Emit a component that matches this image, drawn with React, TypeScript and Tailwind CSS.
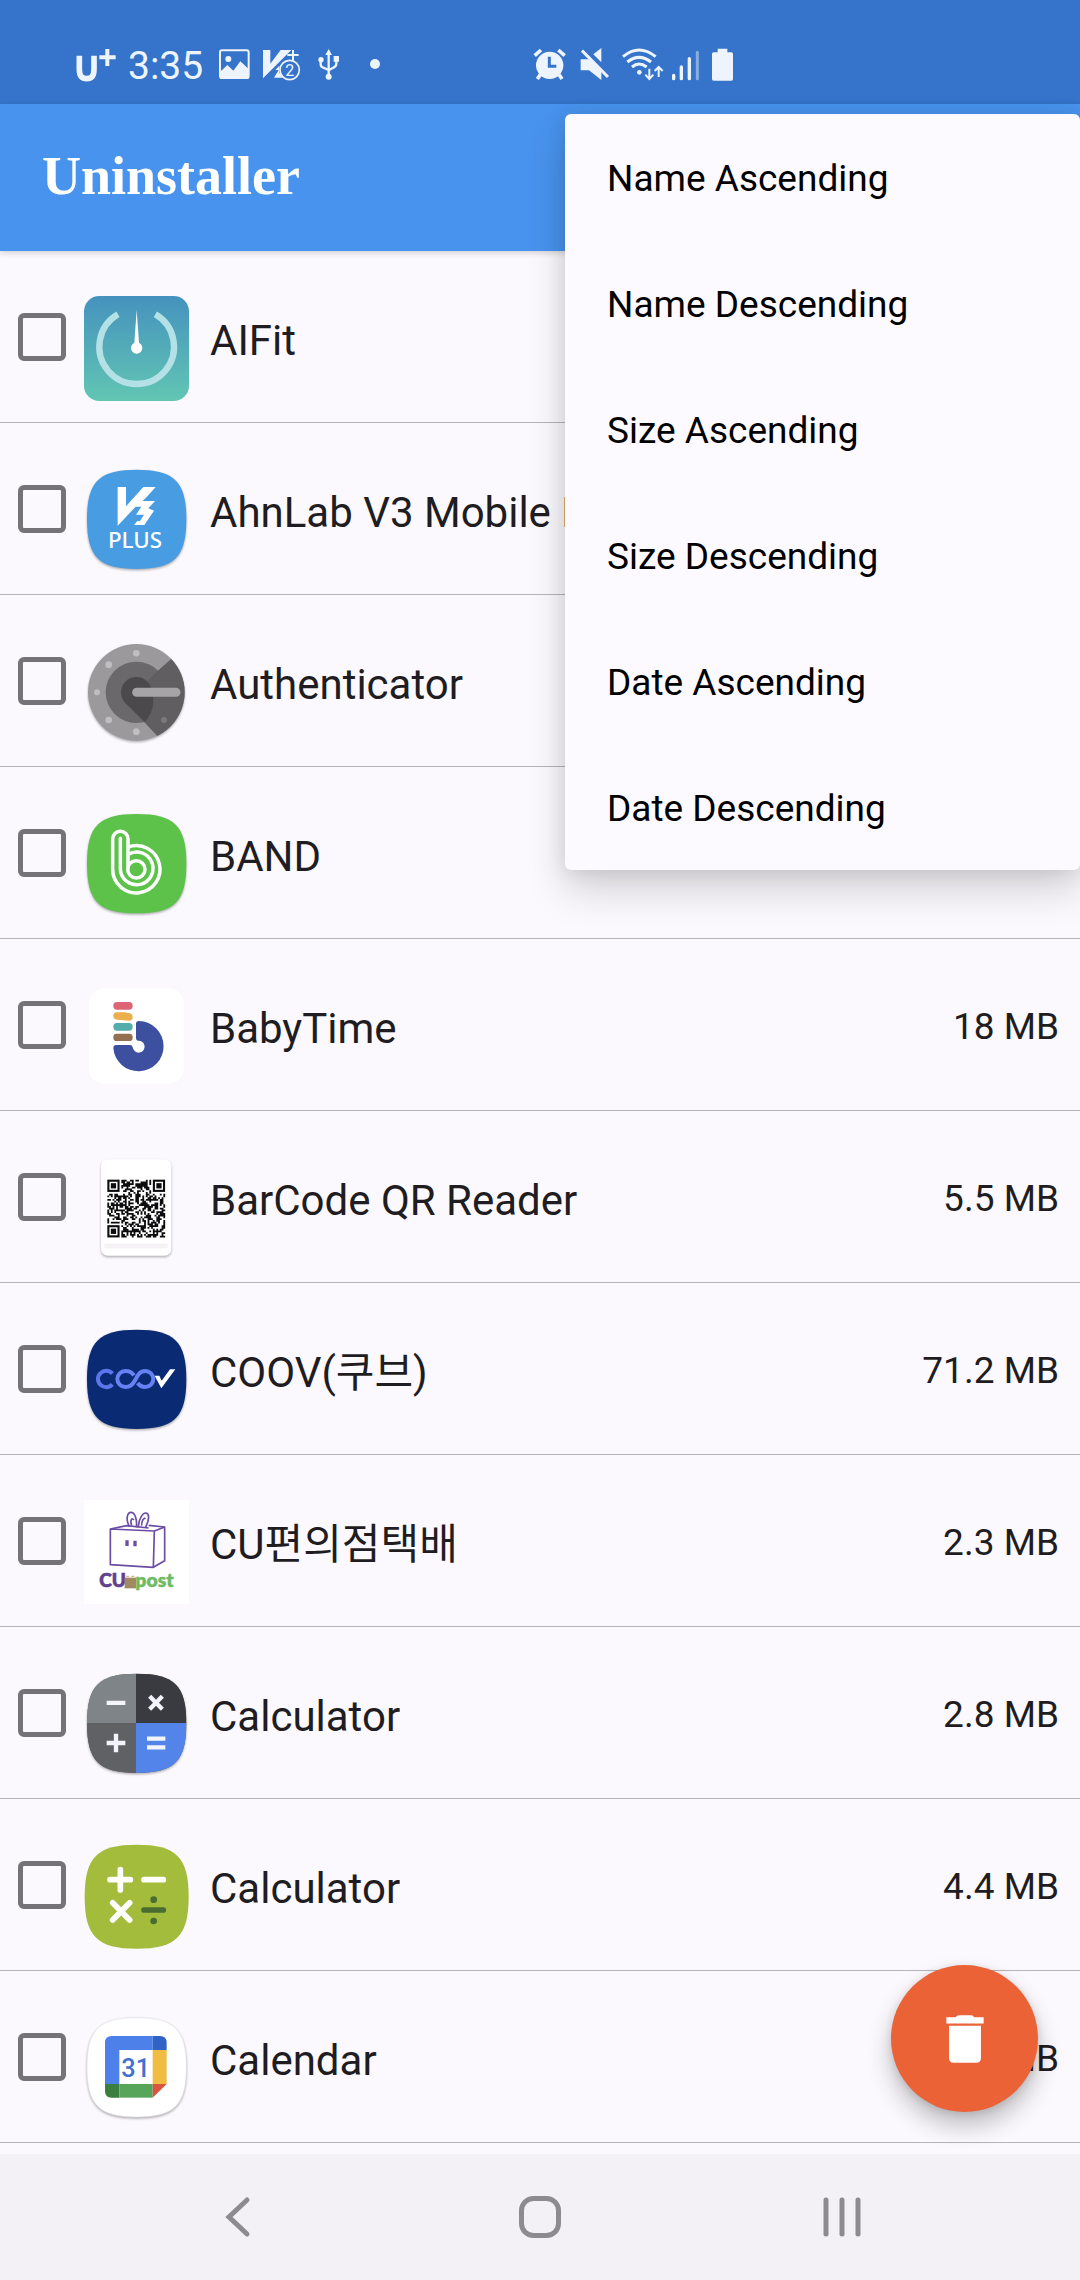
import React, { useState } from "react";

/* ---------- shared drawing helpers ---------- */

function squircle(cx: number, cy: number, r: number) {
  const k = r * 0.76;
  return `M${cx} ${cy - r}C${cx + k} ${cy - r} ${cx + r} ${cy - k} ${cx + r} ${cy}C${cx + r} ${cy + k} ${cx + k} ${cy + r} ${cx} ${cy + r}C${cx - k} ${cy + r} ${cx - r} ${cy + k} ${cx - r} ${cy}C${cx - r} ${cy - k} ${cx - k} ${cy - r} ${cx} ${cy - r}Z`;
}

function IconFrame({ top, children }: { top: number; children: React.ReactNode }) {
  return (
    <svg viewBox={`252 ${top} 315 315`} className="size-full overflow-visible" aria-hidden="true">
      {children}
    </svg>
  );
}

const SOFT = "drop-shadow-[0_4px_3px_rgba(0,0,0,0.32)]";

/* ---------- app icons ---------- */

function AiFitIcon() {
  return (
    <IconFrame top={108}>
      <defs>
        <linearGradient id="aifit" x1="0" y1="0" x2="0" y2="1">
          <stop offset="0" stopColor="#4592be" />
          <stop offset="1" stopColor="#62c6b3" />
        </linearGradient>
      </defs>
      <rect x="252" y="108" width="315" height="315" rx="46" fill="url(#aifit)" />
      <path d="M354 163A112 112 0 1 0 466 163" fill="none" stroke="#b3e1e6" strokeWidth="19" />
      <path d="M410 150L402 262H418Z" fill="#fff" />
      <circle cx="410" cy="264" r="17" fill="#fff" />
    </IconFrame>
  );
}

function V3Icon() {
  return (
    <IconFrame top={624}>
      <path d={squircle(410, 778, 149)} fill="#489ce1" className={SOFT} />
      <path
        d="M353 681H378V739L430 681H467L440 711L428 723H465L445 745L462 752L433 795H402L412 783H420L432 764H408L424 740H407L353 797Z"
        fill="#fff"
      />
      <text x="324" y="863" fontFamily="'Noto Sans', sans-serif" fontSize="67" fontWeight="500" fill="#fff">
        PLUS
      </text>
    </IconFrame>
  );
}

function AuthenticatorIcon() {
  return (
    <IconFrame top={60}>
      <defs>
        <clipPath id="auth-disc">
          <circle cx="409" cy="217" r="145" />
        </clipPath>
      </defs>
      <circle cx="409" cy="217" r="145" fill="#9b999b" className={SOFT} />
      <g clipPath="url(#auth-disc)">
        <circle cx="409" cy="217" r="92" fill="#6a686b" />
        <path d="M472 154L514 116L570 160V300L474 350L378 248L409 217Z" fill="#605e61" />
        <path d="M377 250L440 184A92 92 0 0 1 434 306Z" fill="#4b494c" />
        <circle cx="409" cy="217" r="46" fill="#4b494c" />
      </g>
      <g fill="#c0bec0">
        <circle cx="409" cy="100" r="10" />
        <circle cx="326" cy="134" r="10" />
        <circle cx="291" cy="217" r="9" />
        <circle cx="326" cy="300" r="10" />
        <circle cx="409" cy="335" r="10" />
      </g>
      <circle cx="492" cy="300" r="9" fill="#7b797b" />
      <path d="M410 217H528" stroke="#a6a4a6" strokeWidth="27" strokeLinecap="round" />
    </IconFrame>
  );
}

function BandIcon() {
  return (
    <IconFrame top={576}>
      <path d={squircle(410, 731, 149)} fill="#5cc24a" className={SOFT} />
      <g fill="none" stroke="#fff" strokeWidth="10.5">
        <path d="M385 681A71 71 0 1 1 338 748V657A22.500 22.500 0 0 1 384 657V748" />
        <path d="M385 703A49 49 0 1 1 361 748V655" strokeLinecap="round" />
        <circle cx="409" cy="748" r="26" />
      </g>
    </IconFrame>
  );
}

function BabyTimeIcon() {
  return (
    <IconFrame top={72}>
      <rect x="267" y="85" width="284" height="286" rx="44" fill="#fff" />
      <rect x="340" y="126" width="58" height="23" rx="11" fill="#dc6676" />
      <path d="M351 157H375L388 160Q398 161 398 172Q398 183 386 182L351 179Q340 178 340 168Q340 157 351 157Z" fill="#ebb04c" />
      <rect x="340" y="189" width="58" height="23" rx="11" fill="#53adab" />
      <rect x="340" y="221" width="58" height="22" rx="10" fill="#937052" />
      <path d="M408 191Q408 183 417 183A75.500 75.500 0 1 1 340 264Q340 255 349 255H390Q397 255 398 262A18 18 0 1 0 414 242Q408 242 408 234Z" fill="#3c509f" />
    </IconFrame>
  );
}

function isFinder(r: number, c: number) {
  return (r < 8 && c < 8) || (r < 8 && c > 24) || (r > 24 && c < 8);
}

const QR_MODULES = (() => {
  let seed = 20417;
  let d = "";
  for (let r = 0; r < 33; r++) {
    for (let c = 0; c < 33; c++) {
      seed = (seed * 1103515245 + 12345) % 2147483648;
      if (!isFinder(r, c) && seed / 2147483648 < 0.53) d += `M${c} ${r}h1.05v1.05h-1.05z`;
    }
  }
  return d;
})();

function QrIcon() {
  return (
    <IconFrame top={588}>
      <rect x="303" y="598" width="211" height="289" rx="20" fill="#fff" className={SOFT} />
      <rect x="313" y="851" width="190" height="14" fill="#f5f3f6" />
      <g transform="translate(322 659) scale(5.25)" fill="#0c0c0e">
        <path d={QR_MODULES} />
        {[
          [0, 0],
          [26, 0],
          [0, 26],
        ].map(([x, y]) => (
          <g key={`${x}-${y}`}>
            <rect x={x + 0.6} y={y + 0.6} width="5.800" height="5.800" fill="none" stroke="#0c0c0e" strokeWidth="1.200" />
            <rect x={x + 2} y={y + 2} width="3" height="3" />
          </g>
        ))}
      </g>
    </IconFrame>
  );
}

function CoovIcon() {
  return (
    <IconFrame top={84}>
      <path d={squircle(410, 238, 149)} fill="#0a2a73" className={SOFT} />
      <g fill="none" strokeWidth="12">
        <path d="M337 221A24.500 24.500 0 1 0 337 253" stroke="#5a76ea" />
        <path d="M402 226C396 217 387 213 376 213A24 24 0 0 0 376 261C391 261 397 254 405 241C413 225 420 213 436 213A24 24 0 0 1 436 261C425 261 418 256 413 249" stroke="#6681f4" />
      </g>
      <path d="M464 227H478L485 242L510 208H526L484 265Z" fill="#fff" />
    </IconFrame>
  );
}

function CuPostIcon() {
  return (
    <IconFrame top={600}>
      <rect x="252" y="600" width="315" height="312" fill="#fff" />
      <g fill="none" stroke="#6b4da3" strokeWidth="5" strokeLinejoin="round">
        <path d="M331 687L463 693L460 802L331 794Z" />
        <path d="M463 693L494 681V782L460 802" />
        <path d="M331 687L380 677M446 676L494 681M380 677L446 684" />
        <path d="M388 680C376 658 382 637 393 637C405 637 412 660 409 682M415 682C416 656 428 638 438 639C450 641 447 664 436 682" />
        <path d="M395 676C389 660 396 652 402 660M425 677C424 664 432 650 436 657" />
      </g>
      <path d="M381 721V738M405 722V739" stroke="#6b4da3" strokeWidth="10" />
      <text x="298" y="861" fontFamily="Lato, sans-serif" fontWeight="900" fontSize="57" fill="#60408f" stroke="#60408f" strokeWidth="2">
        CU
      </text>
      <path d="M374 833H408V865H374Z" fill="#a08a62" />
      <path d="M379 829H387M394 829H403" stroke="#d8b27d" strokeWidth="4" />
      <text x="406" y="861" fontFamily="Lato, sans-serif" fontWeight="800" fontSize="58" fill="#6fba62" stroke="#6fba62" strokeWidth="1">
        post
      </text>
    </IconFrame>
  );
}

function GoogleCalcIcon() {
  return (
    <IconFrame top={96}>
      <defs>
        <clipPath id="gcalc">
          <path d={squircle(410, 250, 149)} />
        </clipPath>
      </defs>
      <path d={squircle(410, 250, 149)} fill="#606164" className={SOFT} />
      <g clipPath="url(#gcalc)">
        <rect x="258" y="98" width="150" height="151" fill="#7f8488" />
        <rect x="408" y="98" width="155" height="151" fill="#3a3b40" />
        <rect x="258" y="249" width="150" height="155" fill="#606164" />
        <rect x="408" y="249" width="155" height="155" fill="#5284ea" />
      </g>
      <g stroke="#f1f4fa" strokeWidth="13">
        <path d="M320 188.500H376M320 309H376M348 281V337" />
        <path d="M449 169L487 208M487 169L449 208" />
        <path d="M441 296H496M441 322H496" />
      </g>
    </IconFrame>
  );
}

function GreenCalcIcon() {
  return (
    <IconFrame top={612}>
      <path d={squircle(410, 770, 156)} fill="#a3bc3c" />
      <g stroke="#fff" strokeWidth="17" strokeLinecap="round">
        <path d="M330 719H391M361 689V750M432 719H490" />
        <path d="M338 788L389 840M389 788L338 840" />
      </g>
      <path d="M432 810H490" stroke="#496c31" strokeWidth="17" strokeLinecap="round" />
      <circle cx="461" cy="779" r="10" fill="#496c31" />
      <circle cx="461" cy="843" r="10" fill="#496c31" />
    </IconFrame>
  );
}

function CalendarIcon() {
  return (
    <IconFrame top={108}>
      <path d={squircle(410, 262, 149)} fill="#fff" stroke="#e4e2e5" strokeWidth="2" className={SOFT} />
      <path d="M335 168H458V210H358V312H315V188Q315 168 335 168Z" fill="#4e80ea" />
      <path d="M458 168H480Q500 168 500 188V210H458Z" fill="#3163c6" />
      <rect x="458" y="210" width="42" height="102" fill="#f0bd42" />
      <path d="M315 312H358V353H335Q315 353 315 333Z" fill="#3a7e40" />
      <rect x="358" y="312" width="100" height="41" fill="#57a45b" />
      <path d="M458 312H500L458 353Z" fill="#d9553f" />
      <text x="407" y="291" textAnchor="middle" fontFamily="Roboto, sans-serif" fontWeight="500" fontSize="76" fill="#3f72d2">
        31
      </text>
    </IconFrame>
  );
}

/* ---------- status bar ---------- */

function StatusBar() {
  return (
    <div className="flex h-[104px] items-start bg-[#3574ca] pt-12 text-[#eef4fd]">
      <div className="flex w-[533px] shrink-0 items-start pl-[75px]">
        <svg viewBox="225 144 126 102" className="h-[34px] w-[42px]" role="img" aria-label="U+">
          <path d="M238 167V208C238 230 247 236 260 236C273 236 282 230 282 208V167" fill="none" stroke="currentColor" strokeWidth="17" />
          <path d="M298 172H347M322 147V198" stroke="currentColor" strokeWidth="12" />
        </svg>
        <span className="ml-[11px] w-[79px] text-[39px] leading-9">3:35</span>
        <svg viewBox="654 144 99 102" className="ml-[11px] h-[34px] w-[33px]" aria-hidden="true">
          <rect x="660" y="151" width="86" height="83" rx="6" fill="none" stroke="currentColor" strokeWidth="6" />
          <circle cx="685" cy="177" r="9" fill="currentColor" />
          <path d="M660 216L682 195L700 212L721 184L746 207V236H660Z" fill="currentColor" />
        </svg>
        <svg viewBox="786 144 117 102" className="ml-[11px] h-[34px] w-[39px]" aria-hidden="true">
          <path d="M789 150H811V191L842 150H874L789 235Z" fill="currentColor" />
          <path d="M862 165H896M879 150V182" stroke="currentColor" strokeWidth="6" />
          <path d="M838 197L826 210H836L822 233H848L838 218Z" fill="currentColor" />
          <circle cx="869" cy="210" r="29" fill="#3574ca" stroke="currentColor" strokeWidth="5" />
          <text x="869" y="227" textAnchor="middle" fontFamily="Roboto, sans-serif" fontSize="48" fill="currentColor">
            2
          </text>
        </svg>
        <svg viewBox="951 144 72 102" className="ml-4 h-[34px] w-6" aria-hidden="true">
          <path d="M986 160V230M962 175V193Q962 201 970 203L986 210M1009 177V190Q1009 199 1002 202L986 211" fill="none" stroke="currentColor" strokeWidth="7" />
          <path d="M986 147L996 165H976ZM1001 168H1017V185H1001Z" fill="currentColor" />
          <circle cx="963" cy="179" r="8" fill="currentColor" />
          <circle cx="986" cy="230" r="9" fill="currentColor" />
        </svg>
        <span className="mt-[11px] ml-[29px] size-2.5 rounded-full bg-[#eef4fd]" />
      </div>
      <div className="flex items-start gap-3.5">
        <svg viewBox="97 84 99 102" className="h-[34px] w-[33px]" aria-hidden="true">
          <circle cx="147" cy="136" r="41" fill="currentColor" />
          <path d="M102 107L121 90M192 107L173 90" stroke="currentColor" strokeWidth="11" />
          <path d="M119 164L110 177M175 164L184 177" stroke="currentColor" strokeWidth="11" />
          <path d="M146 110V139H167" fill="none" stroke="#3574ca" strokeWidth="9" />
        </svg>
        <svg viewBox="241 84 90 102" className="h-[34px] w-[30px]" aria-hidden="true">
          <path d="M243 118H268L305 155V180L268 151H243Z" fill="currentColor" />
          <path d="M281 103L305 84V127Z" fill="currentColor" />
          <path d="M252 86L330 166" stroke="#3574ca" strokeWidth="7" />
          <path d="M247 92L325 171" stroke="currentColor" strokeWidth="9" />
        </svg>
        <svg viewBox="366 81 126 102" className="-ml-0.5 h-[34px] w-[42px]" aria-hidden="true">
          <g fill="none" stroke="currentColor" strokeWidth="9">
            <path d="M369 107Q417 67 467 107" />
            <path d="M382 123Q417 95 453 123" />
            <path d="M396 138Q417 120 440 138" />
          </g>
          <circle cx="418" cy="154" r="7" fill="currentColor" />
          <path d="M448 143V170M436 161L448 174L460 161M476 168V140M464 150L476 138L488 150" fill="none" stroke="currentColor" strokeWidth="6" />
        </svg>
        <svg viewBox="516 81 84 102" className="-ml-1.5 h-[34px] w-7" aria-hidden="true">
          <path d="M521 163V173M544 138V173M568 113V173" stroke="currentColor" strokeWidth="10" strokeLinecap="round" />
          <path d="M592 94V173" stroke="currentColor" strokeWidth="9" strokeLinecap="round" opacity="0.45" />
        </svg>
        <svg viewBox="639 84 63 102" className="-ml-0.5 h-[34px] w-[21px]" aria-hidden="true">
          <path d="M656 86H685V97H697Q702 97 702 102V177Q702 182 697 182H644Q639 182 639 177V102Q639 97 644 97H656Z" fill="currentColor" />
        </svg>
      </div>
    </div>
  );
}

/* ---------- list ---------- */

type AppEntry = { name: string; size: string; Icon: () => React.JSX.Element };

const APPS: AppEntry[] = [
  { name: "AIFit", size: "", Icon: AiFitIcon },
  { name: "AhnLab V3 Mobile Plus", size: "", Icon: V3Icon },
  { name: "Authenticator", size: "", Icon: AuthenticatorIcon },
  { name: "BAND", size: "", Icon: BandIcon },
  { name: "BabyTime", size: "18 MB", Icon: BabyTimeIcon },
  { name: "BarCode QR Reader", size: "5.5 MB", Icon: QrIcon },
  { name: "COOV(쿠브)", size: "71.2 MB", Icon: CoovIcon },
  { name: "CU편의점택배", size: "2.3 MB", Icon: CuPostIcon },
  { name: "Calculator", size: "2.8 MB", Icon: GoogleCalcIcon },
  { name: "Calculator", size: "4.4 MB", Icon: GreenCalcIcon },
  { name: "Calendar", size: "MB", Icon: CalendarIcon },
];

function AppRow({ app, id }: { app: AppEntry; id: string }) {
  const { Icon } = app;
  return (
    <li className="flex h-[172px] items-center border-b border-[#b6b4b9] pt-px pr-[21px] pl-[18px]">
      <input
        id={id}
        type="checkbox"
        className="size-12 shrink-0 appearance-none rounded-md border-[5px] border-[#757377] checked:bg-[#4893ee]"
      />
      <label htmlFor={id} className="ml-[18px] flex min-w-0 flex-1 items-center">
        <span className="mt-[23px] size-[105px] shrink-0">
          <Icon />
        </span>
        <span className="mt-[7px] ml-[21px] truncate text-[42px] leading-[50px]">{app.name}</span>
      </label>
      <span className="mt-1 shrink-0 text-[37px] leading-[44px]">{app.size}</span>
    </li>
  );
}

const SORT_OPTIONS = [
  "Name Ascending",
  "Name Descending",
  "Size Ascending",
  "Size Descending",
  "Date Ascending",
  "Date Descending",
];

function SortMenu() {
  return (
    <div
      role="menu"
      aria-label="Sort"
      className="absolute top-[114px] right-0 z-20 flex w-[515px] flex-col rounded-md bg-[#fcfafe] shadow-[0_20px_40px_rgba(0,0,0,0.16),0_2px_20px_rgba(0,0,0,0.1)]"
    >
      {SORT_OPTIONS.map((option) => (
        <button key={option} type="button" role="menuitem" className="h-[126px] px-[42px] pt-1 text-left text-[37px] text-black">
          {option}
        </button>
      ))}
    </div>
  );
}

function NavBar() {
  return (
    <nav className="grid h-[126px] grid-cols-3 items-center bg-[#f3f1f5] px-[8%] text-[#8d8b8f]">
      <button type="button" aria-label="Back" className="flex justify-center">
        <svg viewBox="0 0 42 42" className="size-[42px]" fill="none" stroke="currentColor" strokeWidth="5" strokeLinecap="round">
          <path d="M30 4L12 21L30 38" />
        </svg>
      </button>
      <button type="button" aria-label="Home" className="flex justify-center">
        <svg viewBox="0 0 42 42" className="size-[42px]" fill="none" stroke="currentColor" strokeWidth="5">
          <rect x="2.500" y="2.500" width="37" height="37" rx="12" />
        </svg>
      </button>
      <button type="button" aria-label="Recent apps" className="flex justify-center">
        <svg viewBox="0 0 42 42" className="size-[42px]" stroke="currentColor" strokeWidth="5" strokeLinecap="round">
          <path d="M5 4V38M21 4V38M37 4V38" />
        </svg>
      </button>
    </nav>
  );
}

export default function App() {
  const [menuOpen] = useState(true);
  return (
    <div className="relative flex min-h-screen flex-col overflow-hidden bg-[#fbf9fd] font-[Roboto,'Noto_Sans_CJK_KR',sans-serif] text-[#1f1d21]">
      <StatusBar />
      <header className="z-10 flex h-[147px] items-center bg-[#4893ee] pb-1 pl-[42px] shadow-[0_2px_6px_rgba(0,0,0,0.16)]">
        <h1 className="font-['Liberation_Serif',serif] text-[54px] leading-none font-bold text-white">Uninstaller</h1>
      </header>
      <main className="relative flex-1">
        <ul>
          {APPS.map((app, i) => (
            <AppRow key={i} app={app} id={`app-${i}`} />
          ))}
        </ul>
        <button
          type="button"
          aria-label="Uninstall selected"
          className="absolute right-[42px] bottom-[42px] flex size-[147px] items-center justify-center rounded-full bg-[#eb6237] text-white shadow-[0_14px_24px_rgba(0,0,0,0.24),0_2px_8px_rgba(0,0,0,0.12)]"
        >
          <svg viewBox="737 344 113 143" className="h-12 w-[38px]" fill="currentColor" aria-hidden="true">
            <path d="M738 351H766Q769 345 775 345H812Q818 345 821 351H849V369H738Z" />
            <path d="M746 376H841V472Q841 486 827 486H760Q746 486 746 472Z" />
          </svg>
        </button>
      </main>
      <NavBar />
      {menuOpen && <SortMenu />}
    </div>
  );
}
